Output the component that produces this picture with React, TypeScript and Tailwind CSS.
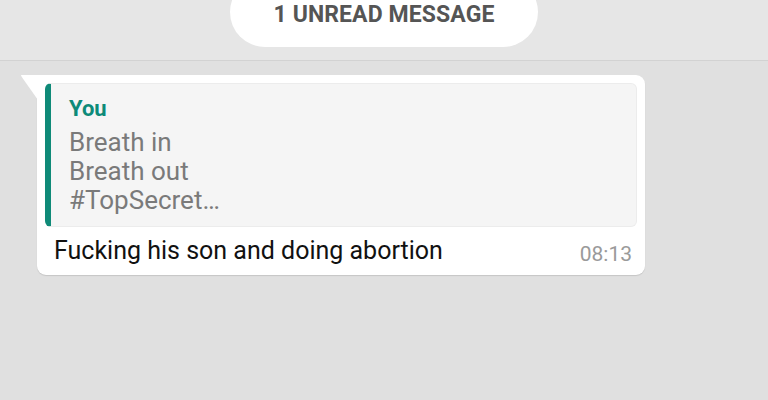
import React from 'react';

const App: React.FC = () => {
  return (
    <div className="w-[768px] h-[400px] overflow-hidden bg-[#e0e0e0] font-['Roboto',sans-serif]">
      <div className="h-[61px] bg-[#e6e6e6] border-b border-[#d2d2d2] flex justify-center">
        <div className="w-[308px] h-[70px] -mt-[23px] rounded-full bg-white flex justify-center pt-[24px]">
          <span className="text-[23px] leading-[28px] font-bold text-[#555555] tracking-[0.1px]">1 UNREAD MESSAGE</span>
        </div>
      </div>

      <div className="pl-[37px] pt-[14px]">
        <div className="relative w-[608px] bg-white rounded-[9px] rounded-tl-none p-[8px] pb-[8px] shadow-[0_1px_1px_rgba(0,0,0,0.12)]">
          <svg className="absolute -left-[16px] top-0" width="17" height="25" viewBox="0 0 17 25">
            <path d="M0 0 H17 V25 L1.5 3 Q0 0.8 0 0 Z" fill="#ffffff" />
          </svg>
          <div className="bg-[#f5f5f5] border border-[#ececec] border-l-[6px] border-l-[#0f8a78] rounded-[6px] pl-[18px] pt-[11px] pb-[11px]">
            <div className="text-[22px] leading-[28px] font-bold text-[#0d8a79]">You</div>
            <div className="mt-[5px] text-[26px] leading-[29px] text-[#7a7a7a]">
              <div>Breath in</div>
              <div>Breath out</div>
              <div>#TopSecret…</div>
            </div>
          </div>
          <div className="flex justify-between items-end pl-[9px] pr-[5px] pt-[8px]">
            <span className="text-[25px] leading-[32px] text-[#111111]">Fucking his son and doing abortion</span>
            <span className="text-[21px] leading-[24px] text-[#9a9a9a] mb-[1px]">08:13</span>
          </div>
        </div>
      </div>
    </div>
  );
};

export default App;
